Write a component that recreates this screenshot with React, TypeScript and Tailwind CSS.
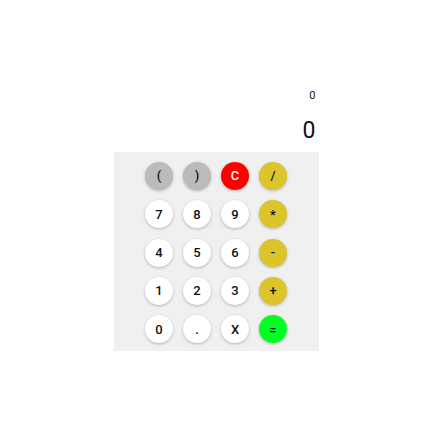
import React from 'react'

type Key = { label: string; kind: 'op' | 'num' | 'paren' | 'clear' | 'eq' }

const keys: Key[] = [
  { label: '(', kind: 'paren' },
  { label: ')', kind: 'paren' },
  { label: 'C', kind: 'clear' },
  { label: '/', kind: 'op' },
  { label: '7', kind: 'num' },
  { label: '8', kind: 'num' },
  { label: '9', kind: 'num' },
  { label: '*', kind: 'op' },
  { label: '4', kind: 'num' },
  { label: '5', kind: 'num' },
  { label: '6', kind: 'num' },
  { label: '-', kind: 'op' },
  { label: '1', kind: 'num' },
  { label: '2', kind: 'num' },
  { label: '3', kind: 'num' },
  { label: '+', kind: 'op' },
  { label: '0', kind: 'num' },
  { label: '.', kind: 'num' },
  { label: 'X', kind: 'num' },
  { label: '=', kind: 'eq' },
]

const kindClass: Record<Key['kind'], string> = {
  num: 'bg-white text-[#111]',
  paren: 'bg-[#bbbbbe] text-[#111]',
  clear: 'bg-[#ff0000] text-white',
  op: 'bg-[#dcc52a] text-[#111]',
  eq: 'bg-[#00ff22] text-[#111]',
}

export default function App() {
  return (
    <div className="w-[432px] h-[432px] bg-white flex flex-col items-center pt-[88px] font-['Roboto',sans-serif]">
      <div className="w-[205px] flex flex-col items-end pr-[3px]">
        <div className="text-[11px] text-[#111]">0</div>
        <div className="mt-[9px] text-[23px] text-[#111]">0</div>
      </div>
      <div className="mt-[4px] w-[205px] h-[199px] bg-[#f0f0f0] pt-[5px] grid grid-cols-[repeat(4,38px)] auto-rows-[38.3px] justify-center">
        {keys.map((k) => (
          <div key={k.label} className="flex items-center justify-center">
            <button
              className={`w-[28px] h-[28px] rounded-full flex items-center justify-center text-[13px] font-medium shadow-[0_1px_3px_rgba(0,0,0,0.25)] ${kindClass[k.kind]}`}
            >
              {k.label}
            </button>
          </div>
        ))}
      </div>
    </div>
  )
}
